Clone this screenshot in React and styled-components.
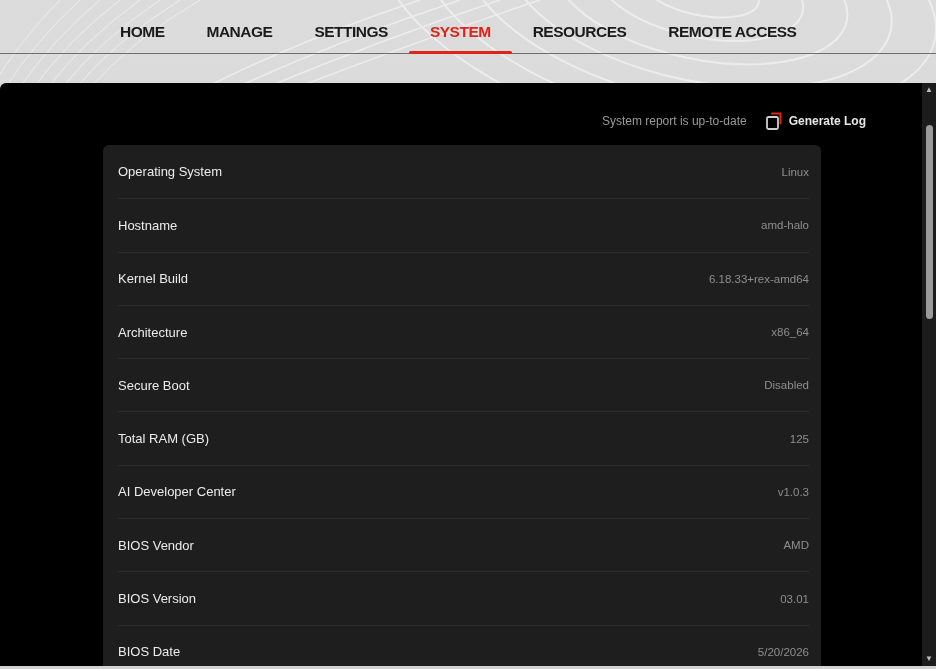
import React from "react";
import styled, { createGlobalStyle } from "styled-components";

const Global = createGlobalStyle`
  html, body { margin: 0; padding: 0; }
  body { font-family: "Liberation Sans", Arial, sans-serif; background: #d6d6d6; }
`;

const Page = styled.div`
  position: relative;
  width: 936px;
  height: 669px;
  overflow: hidden;
  display: flex;
  flex-direction: column;
  background: linear-gradient(180deg, #dcdcdc 0%, #d2d2d2 100%);
`;

const Waves = styled.svg`
  position: absolute;
  inset: 0;
  pointer-events: none;
`;

const Nav = styled.nav`
  position: relative;
  height: 53px;
  border-bottom: 1px solid #6e6e6e;
  display: flex;
  padding-left: 99px;
  align-items: stretch;
`;

const NavItem = styled.div`
  position: relative;
  padding: 0 21px;
  display: flex;
  align-items: center;
  padding-top: 10px;
  box-sizing: border-box;
  font-size: 15.5px;
  font-weight: bold;
  letter-spacing: -0.5px;
  color: ${(p) => (p.$active ? "#e2231a" : "#1a1a1a")};
  &::after {
    content: "";
    display: ${(p) => (p.$active ? "block" : "none")};
    position: absolute;
    left: 0; right: 0; bottom: -1px;
    height: 3px;
    border-radius: 2px;
    background: #e2231a;
  }
`;

const Panel = styled.div`
  position: relative;
  margin-top: 29px;
  flex: 1;
  background: #000;
  border-radius: 6px 0 0 0;
  display: flex;
  margin-bottom: 3px;
  overflow: hidden;
`;

const Content = styled.div`
  flex: 1;
  padding: 28px 0 0 103px;
  display: flex;
  flex-direction: column;
`;

const Toolbar = styled.div`
  width: 763px;
  display: flex;
  justify-content: flex-end;
  align-items: center;
  gap: 18px;
  height: 20px;
  margin-bottom: 14px;
`;

const Status = styled.span`
  color: #9a9a9a;
  font-size: 12px;
`;

const LogButton = styled.button`
  background: none;
  border: none;
  padding: 0;
  display: flex;
  align-items: center;
  gap: 4px;
  color: #e6e6e6;
  font-family: inherit;
  font-weight: bold;
  font-size: 12px;
`;

const Card = styled.div`
  width: 718px;
  background: #1e1e1e;
  border-radius: 6px;
  padding: 0 12px 0 15px;
  box-sizing: border-box;
`;

const Row = styled.div`
  height: 53.3px;
  display: flex;
  justify-content: space-between;
  align-items: center;
  border-top: ${(p) => (p.$first ? "none" : "1px solid #2c2c2c")};
  box-sizing: border-box;
`;

const Label = styled.span`
  color: #ececec;
  font-size: 13px;
`;

const Value = styled.span`
  color: #8e8e8e;
  font-size: 11.5px;
`;

const Scrollbar = styled.div`
  width: 14px;
  background: #1c1c1c;
  display: flex;
  flex-direction: column;
  align-items: center;
`;

const Arrow = styled.div`
  height: 14px;
  color: #bdbdbd;
  font-size: 8px;
  line-height: 14px;
`;

const Track = styled.div`
  flex: 1;
  width: 100%;
  display: flex;
  justify-content: center;
  padding-top: 28px;
`;

const Thumb = styled.div`
  width: 7px;
  height: 194px;
  border-radius: 4px;
  background: #9a9a9a;
`;

const rows = [
  ["Operating System", "Linux"],
  ["Hostname", "amd-halo"],
  ["Kernel Build", "6.18.33+rex-amd64"],
  ["Architecture", "x86_64"],
  ["Secure Boot", "Disabled"],
  ["Total RAM (GB)", "125"],
  ["AI Developer Center", "v1.0.3"],
  ["BIOS Vendor", "AMD"],
  ["BIOS Version", "03.01"],
  ["BIOS Date", "5/20/2026"],
];

const nav = ["HOME", "MANAGE", "SETTINGS", "SYSTEM", "RESOURCES", "REMOTE ACCESS"];

export default function App() {
  return (
    <Page>
      <Global />
      <Waves width="936" height="669" viewBox="0 0 936 669">
        <g fill="none" stroke="#f4f4f4" strokeWidth="2" opacity="0.7">
          {[0, 1, 2, 3, 4, 5, 6].map((i) => (
            <ellipse key={i} cx="700" cy="-10" rx={60 + i * 45} ry={25 + i * 22} transform="rotate(12 700 -10)" />
          ))}
          {[0, 1, 2, 3, 4, 5, 6, 7].map((i) => (
            <path key={"l" + i} d={`M${-10 + i * 14} 90 Q ${20 + i * 16} 40 ${60 + i * 20} 0`} strokeWidth="1" />
          ))}
          {[0, 1, 2, 3].map((i) => (
            <path key={"m" + i} d={`M${200 + i * 30} 90 Q ${300 + i * 40} 40 ${420 + i * 40} 0`} strokeWidth="1.5" />
          ))}
        </g>
      </Waves>
      <Nav>
        {nav.map((n) => (
          <NavItem key={n} $active={n === "SYSTEM"}>{n}</NavItem>
        ))}
      </Nav>
      <Panel>
        <Content>
          <Toolbar>
            <Status>System report is up-to-date</Status>
            <LogButton>
              <svg width="20" height="20" viewBox="0 0 20 20" fill="none">
                <path d="M7 2.5h8.5v10" stroke="#e2231a" strokeWidth="2" strokeLinecap="round" />
                <rect x="2" y="6" width="11" height="12" rx="1.5" stroke="#cfcfcf" strokeWidth="1.8" />
              </svg>
              Generate Log
            </LogButton>
          </Toolbar>
          <Card>
            {rows.map(([l, v], i) => (
              <Row key={l} $first={i === 0}>
                <Label>{l}</Label>
                <Value>{v}</Value>
              </Row>
            ))}
          </Card>
        </Content>
        <Scrollbar>
          <Arrow>▲</Arrow>
          <Track><Thumb /></Track>
          <Arrow>▼</Arrow>
        </Scrollbar>
      </Panel>
    </Page>
  );
}
